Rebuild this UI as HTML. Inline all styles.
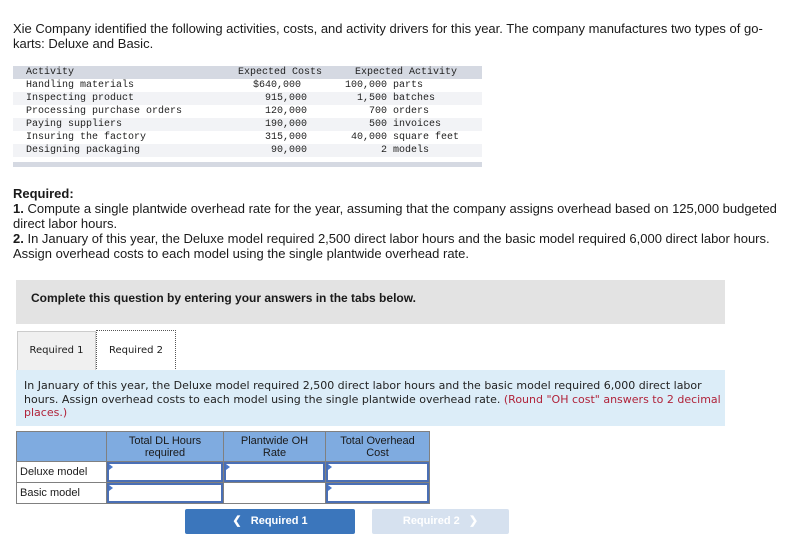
<!DOCTYPE html>
<html><head><meta charset="utf-8"><style>
body{margin:0;width:798px;height:549px;background:#fff;font-family:"Liberation Sans",sans-serif;color:#1a1a1a;position:relative;overflow:hidden}
.a{position:absolute}
.p{font-size:13px;line-height:15px}
.mono{font-family:"Liberation Mono",monospace;font-size:10px;line-height:13px;color:#222}
.row{position:absolute;left:13px;width:469px;height:13px}
.row span{position:absolute;white-space:pre}
.g{background:#f2f3f6}
.tab{font-family:"DejaVu Sans",sans-serif;font-size:10px}
.btn{position:absolute;height:25px;border-radius:2px;font-size:11px;font-weight:bold;color:#fff;text-align:center;line-height:25px}
td{border:1px solid #808080;padding:0}
.in{border:2px solid #4a6fb5;height:16px;position:relative}
.in:before{content:"";position:absolute;left:0;top:0;border-left:4px solid #4a78c8;border-top:3px solid transparent;border-bottom:3px solid transparent}
</style></head><body>
<div class="a p" style="left:13px;top:21px;width:770px">Xie Company identified the following activities, costs, and activity drivers for this year. The company manufactures two types of go-karts: Deluxe and Basic.</div>

<div class="a" style="left:13px;top:66px;width:469px;height:13px;background:#d5d9e2"></div>
<div class="a g" style="left:13px;top:92px;width:469px;height:13px"></div>
<div class="a g" style="left:13px;top:118px;width:469px;height:13px"></div>
<div class="a g" style="left:13px;top:144px;width:469px;height:13px"></div>
<div class="a" style="left:13px;top:162px;width:469px;height:5px;background:#d5d9e2"></div>
<div class="mono">
<div class="row" style="top:66px"><span style="left:13px">Activity</span><span style="left:225px">Expected Costs</span><span style="left:342px">Expected Activity</span></div>
<div class="row" style="top:79px"><span style="left:13px">Handling materials</span><span style="left:240px">$640,000</span><span style="left:332px">100,000 parts</span></div>
<div class="row" style="top:92px"><span style="left:13px">Inspecting product</span><span style="left:240px">  915,000</span><span style="left:332px">  1,500 batches</span></div>
<div class="row" style="top:105px"><span style="left:13px">Processing purchase orders</span><span style="left:240px">  120,000</span><span style="left:332px">    700 orders</span></div>
<div class="row" style="top:118px"><span style="left:13px">Paying suppliers</span><span style="left:240px">  190,000</span><span style="left:332px">    500 invoices</span></div>
<div class="row" style="top:131px"><span style="left:13px">Insuring the factory</span><span style="left:240px">  315,000</span><span style="left:332px"> 40,000 square feet</span></div>
<div class="row" style="top:144px"><span style="left:13px">Designing packaging</span><span style="left:240px">   90,000</span><span style="left:332px">      2 models</span></div>
</div>

<div class="a p" style="left:13px;top:186px;width:780px"><b>Required:</b><br><b>1.</b> Compute a single plantwide overhead rate for the year, assuming that the company assigns overhead based on 125,000 budgeted direct labor hours.<br><b>2.</b> In January of this year, the Deluxe model required 2,500 direct labor hours and the basic model required 6,000 direct labor hours. Assign overhead costs to each model using the single plantwide overhead rate.</div>

<div class="a" style="left:16px;top:280px;width:709px;height:44px;background:#e3e3e3"></div>
<div class="a" style="left:31px;top:291px;font-size:12px;font-weight:bold;line-height:14px">Complete this question by entering your answers in the tabs below.</div>

<div class="a tab" style="left:17px;top:331px;width:77px;height:38px;background:#f0f0f0;border:1px solid #ccc;border-bottom:none;text-align:center;line-height:38px">Required 1</div>
<div class="a tab" style="left:96px;top:330px;width:78px;height:40px;background:#fff;border:1px dotted #555;border-bottom:none;text-align:center;line-height:40px">Required 2</div>
<div class="a" style="left:16px;top:370px;width:709px;height:56px;background:#dcedf8"></div>
<div class="a" style="left:24px;top:379px;width:708px;font-family:'DejaVu Sans',sans-serif;font-size:11px;line-height:13.5px;color:#222">In January of this year, the Deluxe model required 2,500 direct labor hours and the basic model required 6,000 direct labor hours. Assign overhead costs to each model using the single plantwide overhead rate. <span style="color:#b0233a">(Round "OH cost" answers to 2 decimal places.)</span></div>

<table class="a" style="left:16px;top:431px;border-collapse:collapse;font-size:11px;width:414px">
<tr style="background:#7fabe0;height:30px;text-align:center;line-height:12px"><td style="width:89px"></td><td style="width:116px">Total DL Hours<br>required</td><td style="width:101px">Plantwide OH<br>Rate</td><td>Total Overhead<br>Cost</td></tr>
<tr style="height:19px"><td style="padding-left:3px">Deluxe model</td><td><div class="in"></div></td><td><div class="in"></div></td><td><div class="in"></div></td></tr>
<tr style="height:19px"><td style="padding-left:3px">Basic model</td><td><div class="in"></div></td><td></td><td><div class="in"></div></td></tr>
</table>

<div class="btn" style="left:185px;top:509px;width:170px;background:#3b76bc">&#10094;&nbsp;&nbsp;&nbsp;Required 1</div>
<div class="btn" style="left:372px;top:509px;width:137px;background:#d6e1ef">Required 2&nbsp;&nbsp;&nbsp;&#10095;</div>
</body></html>
